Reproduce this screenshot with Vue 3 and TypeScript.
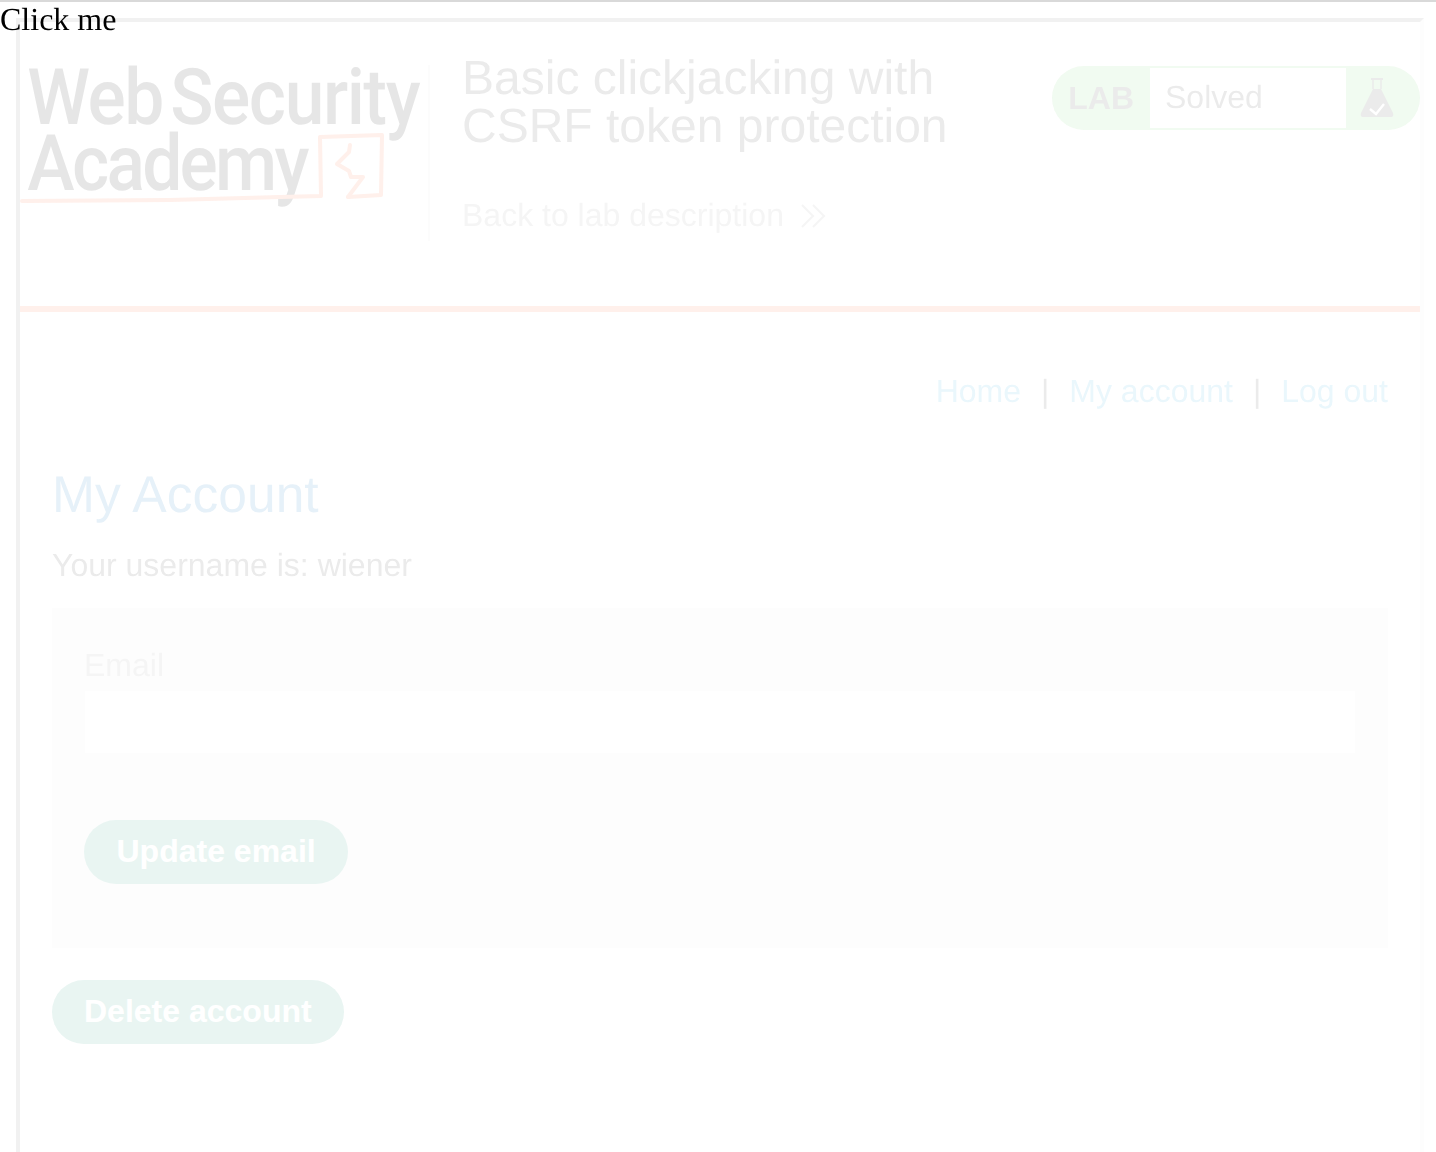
<template>
  <div class="page">
    <div class="click-me">Click me</div>
    <div class="lab-frame">
      <header class="banner">
        <div class="logo">
          <div class="logo-text">
            <span class="logo-line">Web<span class="logo-gap"></span>Security</span>
            <span class="logo-line academy">Academy</span>
          </div>
          <svg class="logo-mark" viewBox="0 0 410 150" width="410" height="150" fill="none" stroke="#ff6633" stroke-width="4" stroke-linecap="round" stroke-linejoin="round">
            <path d="M2 136 L150 135 L301 131 L300 72 L362 70 L361 130 L328 132" />
            <path d="M330 80 L329 87 L317 99 L329 106 L331 112 L343 112 L328 132" />
          </svg>
        </div>
        <div class="title-block">
          <h2>Basic clickjacking with<br />CSRF token protection</h2>
          <a class="back-link">
            Back to lab description
            <svg viewBox="0 0 26 26" width="26" height="26" fill="none" stroke="#999" stroke-width="2">
              <path d="M2 2 L13 13 L2 24" />
              <path d="M13 2 L24 13 L13 24" />
            </svg>
          </a>
        </div>
        <div class="status">
          <span class="status-lab">LAB</span>
          <span class="status-text">Solved</span>
          <span class="status-icon">
            <svg viewBox="0 0 34 40" width="34" height="40">
              <path d="M13 11 H21 L33 35 Q34 39 31 39 H3 Q0 39 1 35 Z" fill="#333" />
              <rect x="11" y="0" width="12" height="2" fill="#333" />
              <path d="M13 2 V11 M21 2 V11" stroke="#333" stroke-width="1.5" />
              <path d="M10 31 L16 36 L24 26" fill="none" stroke="#fff" stroke-width="2.4" />
            </svg>
          </span>
        </div>
      </header>

      <main class="content">
        <nav class="top-links">
          <a>Home</a><span class="sep">|</span>
          <a>My account</a><span class="sep">|</span>
          <a>Log out</a>
        </nav>
        <h1>My Account</h1>
        <p class="username">Your username is: {{ username }}</p>
        <form class="email-form" @submit.prevent>
          <label for="email">Email</label>
          <input id="email" v-model="email" type="email" />
          <button type="submit">Update email</button>
        </form>
        <button class="delete" type="button">Delete account</button>
      </main>
    </div>
  </div>
</template>

<script setup lang="ts">
import { ref } from "vue";

const username = "wiener";
const email = ref("");
</script>

<style>
html,
body {
  margin: 0;
  overflow: hidden;
  background: #fff;
}
</style>

<style scoped>
.page {
  position: relative;
  height: 1150px;
  border-top: 2px solid #d9d9d9;
  overflow: hidden;
  font-family: "Liberation Sans", Arial, sans-serif;
  text-rendering: geometricPrecision;
}

.click-me {
  position: absolute;
  top: -1px;
  left: 0;
  z-index: 2;
  font-family: "Liberation Serif", "Times New Roman", serif;
  font-size: 32px;
  line-height: 36px;
  color: #000;
}

.lab-frame {
  margin: 16px 12px 0 16px;
  height: 1300px;
  border-style: solid;
  border-width: 4px;
  border-color: #767676 #e6e6e6 #e6e6e6 #767676;
  opacity: 0.1;
  color: #333;
  font-size: 32px;
}

.banner {
  display: flex;
  align-items: flex-start;
  height: 290px;
  padding-top: 40px;
  box-sizing: border-box;
  border-bottom: 6px solid #ff6633;
}

.logo {
  position: relative;
  box-sizing: border-box;
  width: 410px;
  height: 176px;
  border-right: 2px solid #ddd;
  margin-top: 3px;
}

.logo-text {
  display: flex;
  flex-direction: column;
  padding: 1px 0 0 8px;
  font-family: Roboto, "Liberation Sans", sans-serif;
  font-size: 78px;
  line-height: 66px;
  letter-spacing: -1.6px;
  color: #000;
  font-weight: 500;
  white-space: nowrap;
  transform: scaleX(0.915);
  transform-origin: left top;
}

.academy {
  letter-spacing: -3px;
}

.logo-gap {
  display: inline-block;
  width: 8px;
}

.logo-mark {
  position: absolute;
  top: 0;
  left: 0;
}

.title-block {
  width: 590px;
  margin-top: -7px;
  margin-left: 32px;
  flex: none;
}

h2 {
  margin: 0;
  font-size: 48px;
  font-weight: 400;
  line-height: 48px;
  color: #333;
}

.back-link {
  display: flex;
  align-items: center;
  gap: 16px;
  margin-top: 46px;
  color: #999;
}

.status {
  display: flex;
  align-items: stretch;
  box-sizing: border-box;
  width: 368px;
  height: 64px;
  margin-top: 4px;
  margin-left: auto;
  border-radius: 32px;
  background: #70d16d;
  overflow: hidden;
  flex: none;
}

.status-lab {
  width: 98px;
  line-height: 65px;
  text-align: right;
  padding-right: 16px;
  box-sizing: border-box;
  font-weight: 700;
  color: #333;
}

.status-text {
  width: 196px;
  margin: 2px 0;
  padding-left: 15px;
  box-sizing: border-box;
  background: #fff;
  line-height: 58px;
  color: #333;
}

.status-icon {
  flex: 1;
  display: flex;
  align-items: center;
  justify-content: center;
  padding-right: 12px;
}

.content {
  padding: 63px 32px 0;
}

.top-links {
  display: flex;
  justify-content: flex-end;
  gap: 20px;
  line-height: 32px;
  color: #29abe2;
}

.sep {
  color: #333;
}

h1 {
  margin: 57px 0 0;
  font-size: 51.6px;
  font-weight: 400;
  line-height: 60px;
  color: #0071bc;
}

.username {
  margin: 23px 0 0;
  line-height: 36px;
  color: #333;
}

.email-form {
  box-sizing: border-box;
  height: 340px;
  margin-top: 25px;
  padding: 39px 32px 32px;
  background: #e6e6e6;
  display: flex;
  flex-direction: column;
  align-items: flex-start;
}

label {
  line-height: 36px;
  color: #999;
}

input {
  box-sizing: border-box;
  width: 100%;
  height: 64px;
  margin-top: 7px;
  border: 1px solid #e6e6e6;
  background: #fff;
}

button {
  height: 64px;
  padding: 0 32.5px 2px;
  border: 0;
  border-radius: 32px;
  background: #1f9a7d;
  color: #fff;
  font-family: inherit;
  font-size: 32px;
  font-weight: 700;
}

.email-form button {
  margin-top: 66px;
}

.delete {
  margin-top: 32px;
  padding: 0 32px 2px;
}
</style>
